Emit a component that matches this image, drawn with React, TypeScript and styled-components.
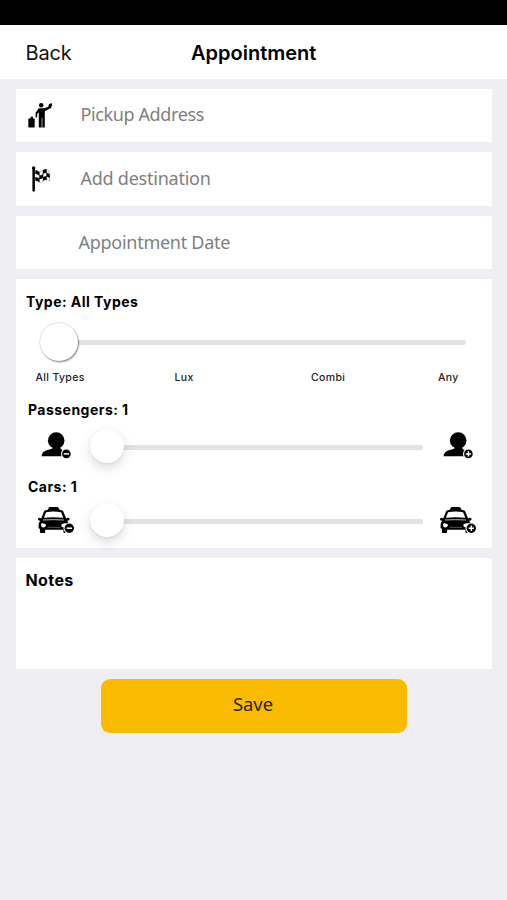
import React from "react";
import styled, { createGlobalStyle } from "styled-components";

const GlobalStyle = createGlobalStyle`
  * { box-sizing: border-box; }
  html, body { margin: 0; background: #eeeef3; }
`;

const Screen = styled.div`
  height: 900px;
  width: 507px;
  display: flex;
  flex-direction: column;
  overflow: hidden;
  background: #eeeef3;
  color: #000;
  font-family: Inter, "Liberation Sans", sans-serif;
`;

const StatusBar = styled.div`
  height: 25px;
  flex: none;
  background: #000;
`;

const NavBar = styled.header`
  display: grid;
  grid-template-columns: 1fr auto 1fr;
  align-items: center;
  height: 54px;
  padding: 1px 25px 0 25.5px;
  background: #fff;
`;

const BackButton = styled.button`
  justify-self: start;
  border: 0;
  padding: 0;
  background: none;
  color: #111;
  font: 400 20px/24px Inter, sans-serif;
  letter-spacing: -0.2px;
`;

const Title = styled.h1`
  margin: 0;
  font-size: 20px;
  line-height: 24px;
  font-weight: 600;
  letter-spacing: 0;
`;

const Content = styled.main`
  display: flex;
  flex-direction: column;
  gap: 9.8px;
  padding: 9.5px 15px 0 16px;
`;

const Field = styled.div`
  display: grid;
  grid-template-columns: 64.5px 1fr;
  align-items: center;
  height: 53.8px;
  background: #fff;
`;

const FieldIcon = styled.svg`
  display: block;
  width: 32px;
  height: 32px;
  margin-left: 8px;
`;

const FieldText = styled.span<{ $shift?: number; $spacing?: number }>`
  margin-left: ${(p) => p.$shift ?? 0}px;
  margin-bottom: 2px;
  grid-column: 2;
  color: #808080;
  font: 400 18px/26px "Noto Sans", sans-serif;
  letter-spacing: ${(p) => p.$spacing ?? 0}px;
  white-space: nowrap;
`;

const Panel = styled.section`
  height: 269px;
  padding: 13px 0 0 10px;
  background: #fff;
`;

const Label = styled.div<{ $indent?: number; $top?: number; $size?: number; $spacing?: number }>`
  margin: ${(p) => p.$top ?? 0}px 0 0 ${(p) => p.$indent ?? 0}px;
  font-size: ${(p) => p.$size ?? 14}px;
  line-height: 20px;
  font-weight: 700;
  letter-spacing: ${(p) => p.$spacing ?? 0.47}px;
`;

const Slider = styled.div`
  display: flex;
  align-items: center;
  flex: 1;
`;

const Track = styled.div`
  flex: 1;
  height: 4.5px;
  border-radius: 3px;
  background: #e2e2e2;
`;

const Thumb = styled.div<{ $size: number; $soft?: boolean }>`
  flex: none;
  width: ${(p) => p.$size}px;
  height: ${(p) => p.$size}px;
  margin-right: -3px;
  margin-bottom: ${(p) => (p.$soft ? 2 : 0)}px;
  border-radius: 50%;
  background: #fff;
  z-index: 1;
  box-shadow: ${(p) =>
    p.$soft
      ? "0 5px 12px rgba(0,0,0,.14), 0 1px 3px rgba(0,0,0,.06)"
      : "0 0 1px 0.5px rgba(0,0,0,.18), 1px 1.5px 1.5px rgba(0,0,0,.36)"};
`;

const TypeRow = styled.div`
  display: flex;
  height: 40px;
  margin: 10px 26px 0 14px;
`;

const Ticks = styled.div`
  display: grid;
  grid-template-columns: 139px 136.5px 127px 1fr;
  margin: 8px 0 0 9.5px;
  font-size: 10.5px;
  line-height: 16px;
  font-weight: 500;
  letter-spacing: 0.35px;
  color: #222;
`;

const CounterRow = styled.div<{ $top: number }>`
  display: grid;
  grid-template-columns: 64px 333px 1fr;
  align-items: center;
  height: 40px;
  margin-top: ${(p) => p.$top}px;
`;

const CounterIcon = styled.svg<{ $left: number }>`
  display: block;
  width: 40px;
  height: 32px;
  margin-left: ${(p) => p.$left}px;
`;

const Notes = styled.section`
  height: 111px;
  padding: 12px 9.5px;
  background: #fff;
`;

const SaveButton = styled.button`
  align-self: center;
  width: 306px;
  height: 54px;
  border: 0;
  border-radius: 9px;
  padding: 0 2px 4px 0;
  background: #fabb00;
  color: #2b2615;
  font: 400 18.5px/26px "Noto Sans", sans-serif;
  letter-spacing: -0.1px;
`;

const Traveler = () => (
  <FieldIcon viewBox="0 0 32 32">
    <circle cx="17.2" cy="6.2" r="2.3" />
    <path d="M14.8 9.2h5.5l4-1.500.6-2.400 2.500-1.400.7 2-1.100 3.200-6.200 3.100v16.300h-2.500v-9.600h-.6v9.600h-2.900V13.200l-1.500 1.600-.3 3.700-1.400-.1v-4.700z" />
    <path d="M6.500 19.500v-1.800h2.500v1.800h1q.7 0 .7.8v7.300q0 .9-.8.9H5.200q-.9 0-.9-.9v-7.300q0-.8.8-.8z" />
  </FieldIcon>
);

const Flag = () => (
  <FieldIcon viewBox="0 0 32 32">
    <circle cx="9.6" cy="4.900" r="1.700" />
    <path d="M8.400 5h2.500v23q-1.200 1.300-2.500 0z" />
    <path
      d="M11.500 7.400q2 0 3.900 1.500v3.400q-1.900-1.500-3.900-1.500zM15.400 12.300q1.900.8 3.700-1.200v3.500q-1.800 1.900-3.700 1.100zM19 7.500q1.600-1.800 3.600-1.100v3.500q-2-.5-3.600 1.200zM22.600 9.900q1.700.2 3.100 1.500v3.500q-1.400-1.300-3.100-1.400zM11.500 14.200q2 0 3.900 1.500v3.400q-1.900-1.500-3.900-1.500zM19.100 14.600q1.600-1.600 3.500-1.100v3.300q-1.800-.5-3.500 1.200z"
      stroke="#000"
      strokeWidth=".4"
    />
    <path d="M15.400 8.900q1.900 1 3.600-1.400M22.600 6.400q1.200.2 2.100 1.300l1 3.700M15.400 19.100q2 .8 3.700-1.100M22.600 16.800q1.800 0 3.100 1.300v-3.200" fill="none" stroke="#777" strokeWidth=".5" />
  </FieldIcon>
);

const Badge = ({ cx, cy, r, plus }: { cx: number; cy: number; r: number; plus?: boolean }) => (
  <g>
    <circle cx={cx} cy={cy} r={r + 1.1} fill="#fff" />
    <circle cx={cx} cy={cy} r={r} />
    <path
      d={`M${cx - 2.7} ${cy}h5.4${plus ? `M${cx} ${cy - 2.7}v5.4` : ""}`}
      stroke="#fff"
      strokeWidth="1.5"
      fill="none"
    />
  </g>
);

const Person = ({ plus }: { plus?: boolean }) => (
  <CounterIcon viewBox="0 0 40 32" $left={plus ? 18.5 : 14}>
    <ellipse cx="16.200" cy="9.400" rx="8.300" ry="8.100" />
    <path d="M12 14h8.600q-.6 3.200.4 4.200 5 1.200 6.500 7H1.400q.7-4.900 6-6.300 4.800-1 5.400-2z" />
    <Badge cx={26.4} cy={22.9} r={4.3} plus={plus} />
  </CounterIcon>
);

const Taxi = ({ plus }: { plus?: boolean }) => (
  <CounterIcon viewBox="0 0 40 32" $left={plus ? 15 : 10}>
    <path d="M11.600 5l1.300-2.500q.2-.6 1-.6h7.400q.8 0 1 .6L23.600 5z" />
    <path d="M9.600 5.200q8-1.700 16 0 1.300.3 1.700 1.300l2.900 7 1.700-.7q1.600 0 1.700 1.400 0 1-.9 1.200l-1.600.4q1.700 1.800 1.700 4.200V27q0 .9-.9.9h-3.600q-.9 0-.9-.9v-2.300H9.200V27q0 .9-.9.9H4.800q-.9 0-.9-.9v-3l-1.300-1v-3q0-2.400 1.700-4.200l-1.400-.4Q2 15.200 2 14.200q.1-1.400 1.700-1.400l1.500.7 2.800-7q.4-1 1.600-1.300z" />
    <path d="M10.100 7.200q7.500-1.400 15 0l2.200 5.500q-9.800-.9-19.400 0z" fill="#fff" />
    <path d="M7 15q10.500-.7 21 0" fill="none" stroke="#ccc" strokeWidth=".9" />
    <path d="M5.200 18.400q3.500-.5 4.900 1.700-.4 2.300-2.700 2.300-3-.3-2.200-4zM30 18.400q-3.500-.5-4.900 1.700.4 2.300 2.700 2.300 3-.3 2.200-4z" fill="#fff" />
    <path d="M11.500 22.300h12.600" stroke="#aaa" strokeWidth=".5" />
    <Badge cx={33.3} cy={23.2} r={4.7} plus={plus} />
  </CounterIcon>
);

export default function App() {
  return (
    <Screen>
      <GlobalStyle />
      <StatusBar />
      <NavBar>
        <BackButton>Back</BackButton>
        <Title>Appointment</Title>
      </NavBar>
      <Content>
        <Field>
          <Traveler />
          <FieldText $spacing={-0.38}>Pickup Address</FieldText>
        </Field>
        <Field>
          <Flag />
          <FieldText $spacing={-0.24}>Add destination</FieldText>
        </Field>
        <Field>
          <FieldText $shift={-2} $spacing={-0.27}>Appointment Date</FieldText>
        </Field>
        <Panel>
          <Label>Type: All Types</Label>
          <TypeRow>
            <Slider>
              <Thumb $size={38} />
              <Track />
            </Slider>
          </TypeRow>
          <Ticks>
            <span>All Types</span>
            <span>Lux</span>
            <span>Combi</span>
            <span>Any</span>
          </Ticks>
          <Label $indent={2} $top={14}>Passengers: 1</Label>
          <CounterRow $top={7}>
            <Person />
            <Slider>
              <Thumb $size={34} $soft />
              <Track />
            </Slider>
            <Person plus />
          </CounterRow>
          <Label $indent={2} $top={10}>Cars: 1</Label>
          <CounterRow $top={4}>
            <Taxi />
            <Slider>
              <Thumb $size={34} $soft />
              <Track />
            </Slider>
            <Taxi plus />
          </CounterRow>
        </Panel>
        <Notes>
          <Label $size={16} $spacing={0.4}>Notes</Label>
        </Notes>
        <SaveButton>Save</SaveButton>
      </Content>
    </Screen>
  );
}
